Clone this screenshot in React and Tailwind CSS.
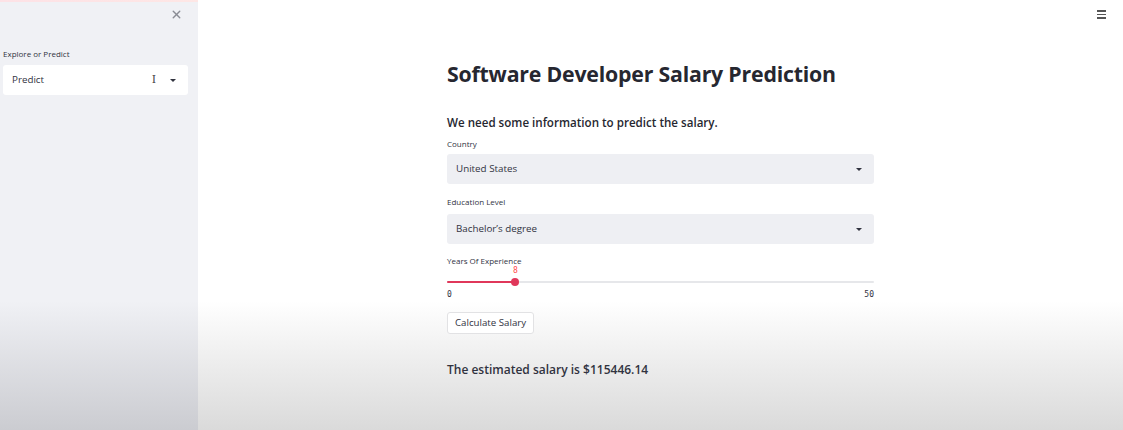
import { X } from 'lucide-react'

function Caret() {
    return (
        <svg width="8" height="5" viewBox="0 0 8 5">
            <path d="M1 1 L4 4 L7 1 Z" fill="#31333f" />
        </svg>
    )
}

function SelectBox({ value, white, children }) {
    return (
        <div
            className={`flex items-center justify-between h-[30px] rounded-[3px] pl-[9px] pr-[11px] ${
                white ? 'bg-white' : 'bg-[#eeeff3]'
            }`}>
            <span className="text-[9.8px] text-[#31333f]">{value}</span>
            <div className="flex items-center gap-[13px]">
                {children}
                <Caret />
            </div>
        </div>
    )
}

export default function App() {
    const years = 8
    const pct = (years / 50) * 100

    return (
        <div
            className="flex w-[1123px] h-[430px] overflow-hidden relative"
            style={{ fontFamily: '"Open Sans", "Noto Sans", sans-serif' }}>
            <div className="absolute top-0 left-0 right-0 h-[2px] bg-gradient-to-r from-[#fde2e6] to-[#fffbe0]" />
            {/* sidebar */}
            <aside className="w-[198px] shrink-0 bg-gradient-to-b from-[#f0f1f5] from-70% to-[#cbccd1] px-[3px]">
                <div className="flex justify-end pt-[8px] pr-[12px]">
                    <X size={13} strokeWidth={2.5} className="text-[#8a8c94]" />
                </div>
                <div className="mt-[27px] text-[8px] text-[#31333f] mb-[5px]">Explore or Predict</div>
                <div className="w-[185px]">
                    <SelectBox value="Predict" white>
                        <span className="text-[11px] text-[#444] font-light" style={{ fontFamily: '"DejaVu Serif", serif' }}>
                            I
                        </span>
                    </SelectBox>
                </div>
            </aside>

            {/* main */}
            <main className="flex-1 relative bg-gradient-to-b from-white from-70% to-[#dadada]">
                <div className="absolute right-[17px] top-[10px] flex flex-col gap-[2px]">
                    <div className="w-[9px] h-[1.5px] bg-[#555]" />
                    <div className="w-[9px] h-[1.5px] bg-[#555]" />
                    <div className="w-[9px] h-[1.5px] bg-[#555]" />
                </div>

                <div className="ml-[249px] w-[427px] pt-[58px] text-[#262730]">
                    <h1 className="text-[21.3px] font-bold tracking-[-0.2px] leading-[32px]">
                        Software Developer Salary Prediction
                    </h1>
                    <h3 className="mt-[24px] text-[11.6px] font-semibold leading-[18px]">
                        We need some information to predict the salary.
                    </h3>

                    <div className="mt-[6px] text-[8px] text-[#31333f] leading-[12px] mb-[4px]">Country</div>
                    <SelectBox value="United States" />

                    <div className="mt-[12px] text-[8px] text-[#31333f] leading-[12px] mb-[6px]">Education Level</div>
                    <SelectBox value="Bachelor’s degree" />

                    <div className="mt-[11px] text-[8px] text-[#31333f] leading-[12px]">Years Of Experience</div>
                    <div className="relative h-[37px]">
                        <div
                            className="absolute top-[-1px] text-[8px] leading-[10px] text-[#ff4b4b] -translate-x-1/2"
                            style={{ left: `${pct}%`, fontFamily: '"DejaVu Sans Mono", monospace' }}>
                            {years}
                        </div>
                        <div className="absolute top-[14px] left-0 right-0 h-[2px] bg-[#e6e7ea] rounded" />
                        <div
                            className="absolute top-[14px] left-0 h-[2px] bg-[#e0375a] rounded"
                            style={{ width: `${pct}%` }}
                        />
                        <div
                            className="absolute top-[11px] w-[8px] h-[8px] rounded-full bg-[#e0375a] -translate-x-1/2"
                            style={{ left: `${pct}%` }}
                        />
                        <div
                            className="absolute top-[23px] left-0 right-0 flex justify-between text-[8px] leading-[10px] text-[#31333f]"
                            style={{ fontFamily: '"DejaVu Sans Mono", monospace' }}>
                            <span>0</span>
                            <span>50</span>
                        </div>
                    </div>

                    <button className="mt-[8px] h-[22px] px-[7px] border border-[#e2e2e4] rounded-[3px] bg-white text-[9.7px] text-[#31333f]">
                        Calculate Salary
                    </button>

                    <div className="mt-[27px] text-[12px] leading-[18px] font-semibold text-[#31333f]">
                        The estimated salary is $115446.14
                    </div>
                </div>
            </main>
        </div>
    )
}
